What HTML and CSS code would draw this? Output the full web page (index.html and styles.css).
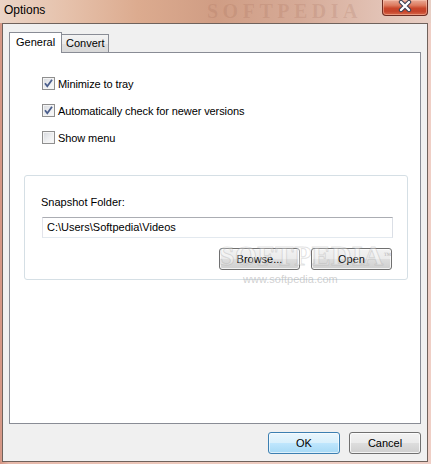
FILE: index.html
```html
<!DOCTYPE html>
<html>
<head>
<meta charset="utf-8">
<link rel="stylesheet" href="styles.css">
</head>
<body>
<div class="window">
  <div class="titlebar">
    <span class="title">Options</span>
    <span class="wm-title">SOFTPEDIA</span>
    <div class="close">
      <svg width="46" height="15" viewBox="0 0 46 15">
        <path d="M19 2 L27 10 M27 2 L19 10" stroke="#3a3f52" stroke-width="4.4" stroke-linecap="round" fill="none"/>
        <path d="M19 2 L27 10 M27 2 L19 10" stroke="#ffffff" stroke-width="2.4" stroke-linecap="round" fill="none"/>
      </svg>
    </div>
  </div>
  <div class="client">
    <div class="tabs">
      <div class="tab active">General</div>
      <div class="tab">Convert</div>
    </div>
    <div class="panel">
      <div class="options">
        <div class="check">
          <span class="box"><svg width="11" height="11" viewBox="0 0 11 11"><path d="M2 5.2 L4.3 8.2 L9 1.8" stroke="#4a5e8c" stroke-width="1.8" fill="none"/></svg></span>
          <span class="ctext">Minimize to tray</span>
        </div>
        <div class="check">
          <span class="box"><svg width="11" height="11" viewBox="0 0 11 11"><path d="M2 5.2 L4.3 8.2 L9 1.8" stroke="#4a5e8c" stroke-width="1.8" fill="none"/></svg></span>
          <span class="ctext">Automatically check for newer versions</span>
        </div>
        <div class="check">
          <span class="box"></span>
          <span class="ctext">Show menu</span>
        </div>
      </div>
      <div class="group">
        <div class="glabel">Snapshot Folder:</div>
        <div class="input">C:\Users\Softpedia\Videos</div>
        <div class="gbuttons">
          <div class="btn wide">Browse...</div>
          <div class="btn wide">Open</div>
        </div>
        <span class="wm-big">SOFTPEDIA<sup>™</sup></span>
        <span class="wm-url">www.softpedia.com</span>
      </div>
    </div>
    <div class="footer">
      <div class="btn default">OK</div>
      <div class="btn">Cancel</div>
    </div>
  </div>
</div>
</body>
</html>
```
FILE: styles.css
```css
* { box-sizing: border-box; }
html, body {
  margin: 0;
  padding: 0;
}
body {
  width: 431px;
  height: 464px;
  overflow: hidden;
  font-family: "Liberation Sans", Arial, sans-serif;
  font-size: 11px;
  color: #000;
}
.window {
  width: 431px;
  height: 464px;
  display: flex;
  flex-direction: column;
  background: linear-gradient(90deg, #d39482 0%, #e6b7a8 2%, #edc9bc 40%, #efcfc6 100%);
}
.titlebar {
  height: 23px;
  display: flex;
  align-items: flex-start;
  position: relative;
  background: linear-gradient(90deg, #ebd4c6 0%, #e6c2ac 15%, #dcab8f 32%, #d09d84 50%, #d6ab98 70%, #e2c2b5 88%, #e8cfc5 100%);
}
.title {
  font-size: 12px;
  line-height: 21px;
  padding-left: 4px;
  color: #000;
  position: relative;
  z-index: 1;
}
.wm-title {
  position: absolute;
  left: 207px;
  top: 0;
  font-family: "Liberation Serif", serif;
  font-weight: bold;
  font-size: 20px;
  letter-spacing: 4.5px;
  line-height: 23px;
  color: rgba(150, 90, 70, 0.16);
}
.close {
  margin-left: auto;
  margin-right: 3px;
  width: 46px;
  height: 16px;
  border: 1px solid #6e2c22;
  border-top: none;
  border-radius: 0 0 4px 4px;
  background: linear-gradient(180deg, #e9aa96 0%, #dd7c60 35%, #c9472b 55%, #c5422a 75%, #d8684a 100%);
  box-shadow: inset 0 0 0 1px rgba(255, 210, 190, 0.45);
  position: relative;
  z-index: 1;
}
.close svg { display: block; position: relative; left: -1px; }
.client {
  margin: 0 3px 2px 2px;
  flex: 1;
  background: #f0f0f0;
  border: 1px solid #6f625c;
  display: flex;
  flex-direction: column;
  padding-top: 8px;
}
.tabs {
  height: 20px;
  display: flex;
  align-items: flex-end;
  padding-left: 6px;
}
.tab {
  height: 18px;
  width: 48px;
  border: 1px solid #898c95;
  border-bottom: none;
  background: linear-gradient(180deg, #f3f3f3 0%, #ebebeb 50%, #dedede 51%, #d9d9d9 100%);
  padding-left: 4px;
  line-height: 17px;
  margin-left: -1px;
}
.tab.active {
  height: 21px;
  width: 53px;
  margin-left: 0;
  margin-bottom: -1px;
  background: #fff;
  position: relative;
  z-index: 1;
  padding-left: 6px;
  line-height: 16px;
  padding-top: 1px;
}
.panel {
  margin: 0 6px;
  height: 372px;
  border: 1px solid #898c95;
  background: #fff;
}
.options {
  padding: 24px 0 0 32px;
  display: flex;
  flex-direction: column;
  gap: 12px;
}
.check {
  display: flex;
  align-items: flex-start;
  height: 15px;
}
.box {
  width: 13px;
  height: 13px;
  border: 1px solid #8f8f8f;
  background: linear-gradient(135deg, #d5d8dd 0%, #eeeff1 55%, #fbfbfb 100%);
  box-shadow: inset 0 0 0 1px #f4f4f4;
  display: block;
}
.box svg { display: block; }
.ctext {
  line-height: 15px;
  margin-left: 3px;
  letter-spacing: -0.1px;
}
.group {
  position: relative;
  margin: 29px 0 0 14px;
  width: 384px;
  height: 105px;
  border: 1px solid #d5dfe5;
  border-radius: 3px;
  padding: 19px 0 9px 16px;
}
.glabel {
  line-height: 15px;
  height: 15px;
}
.input {
  margin: 7px 0 0 1px;
  width: 351px;
  height: 21px;
  border: 1px solid;
  border-color: #abadb3 #dbdfe6 #e3e9ef #e2e3ea;
  background: #fff;
  line-height: 19px;
  padding-left: 4px;
}
.gbuttons {
  margin-top: 10px;
  display: flex;
  justify-content: flex-end;
  gap: 11px;
  padding-right: 15px;
}
.btn {
  width: 72px;
  height: 22px;
  border: 1px solid #707070;
  border-radius: 3px;
  background: linear-gradient(180deg, #f2f2f2 0%, #ebebeb 48%, #dddddd 52%, #cfcfcf 100%);
  box-shadow: inset 0 0 0 1px rgba(255, 255, 255, 0.75);
  text-align: center;
  line-height: 20px;
}
.btn.wide { width: 81px; }
.btn.default {
  border-color: #3c7fb1;
  background: linear-gradient(180deg, #eaf6fd 0%, #d9f0fc 48%, #bee6fd 52%, #a7d9f5 100%);
  box-shadow: inset 0 0 0 1px rgba(255, 255, 255, 0.6);
}
.wm-big {
  position: absolute;
  left: 194px;
  top: 66px;
  font-family: "Liberation Serif", serif;
  font-weight: bold;
  font-size: 28px;
  line-height: 28px;
  letter-spacing: 0.5px;
  color: rgba(255, 255, 255, 0.35);
  -webkit-text-stroke: 1px rgba(150, 150, 150, 0.28);
  pointer-events: none;
}
.wm-big sup {
  font-size: 8px;
  vertical-align: top;
  -webkit-text-stroke: 0;
  color: rgba(150, 150, 150, 0.5);
}
.wm-url {
  position: absolute;
  left: 218px;
  top: 97px;
  font-size: 11px;
  line-height: 12px;
  color: rgba(170, 170, 170, 0.55);
  pointer-events: none;
}
.footer {
  padding: 8px 6px 0 0;
  display: flex;
  justify-content: flex-end;
  gap: 9px;
}
```
